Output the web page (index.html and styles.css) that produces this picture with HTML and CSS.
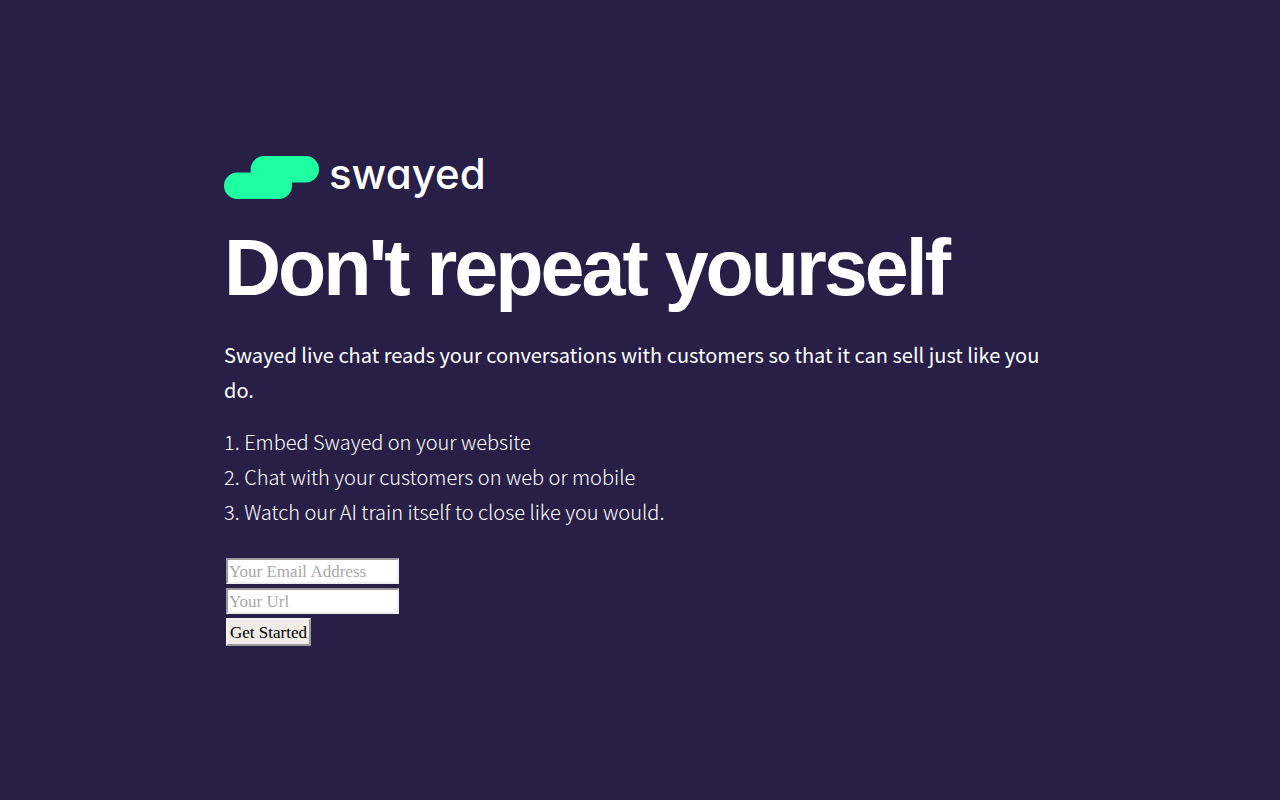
FILE: index.html
```html
<!DOCTYPE html>
<html lang="en">
<head>
<meta charset="utf-8">
<meta name="viewport" content="width=device-width, initial-scale=1">
<title>Swayed</title>
<link rel="stylesheet" href="styles.css">
</head>
<body>
<main class="hero">
  <div class="brand">
    <svg class="brand-mark" viewBox="0 0 95 43" aria-hidden="true">
      <path d="M40 0H81.750A13.250 13.250 0 0 1 81.750 26.500H68V29.700A13.300 13.300 0 0 1 54.700 43H13.250A13.250 13.250 0 0 1 13.250 16.500H26.700V13.300A13.300 13.300 0 0 1 40 0Z"/>
    </svg>
    <span class="brand-name">swayed</span>
  </div>
  <h1 class="headline">Don't repeat yourself</h1>
  <p class="lead">Swayed live chat reads your conversations with customers so that it can sell just like you do.</p>
  <ol class="steps">
    <li>Embed Swayed on your website</li>
    <li>Chat with your customers on web or mobile</li>
    <li>Watch our AI train itself to close like you would.</li>
  </ol>
  <form class="signup">
    <input class="field" type="email" placeholder="Your Email Address" aria-label="Your Email Address">
    <input class="field" type="text" placeholder="Your Url" aria-label="Your Url">
    <button class="submit" type="submit">Get Started</button>
  </form>
</main>
</body>
</html>
```
FILE: styles.css
```css
* {
  box-sizing: border-box;
}

body {
  margin: 0;
  min-height: 100vh;
  display: flex;
  align-items: center;
  justify-content: center;
  background: #281f47;
  color: #fff;
  font-family: "Noto Sans CJK SC", sans-serif;
}

.hero {
  width: 65%;
  padding-top: 2px;
}

.brand {
  display: flex;
  align-items: flex-start;
  gap: 10px;
  height: 43px;
}

.brand-mark {
  width: 95px;
  height: 43px;
  fill: #1dffa0;
}

.brand-name {
  font-family: Inter, sans-serif;
  font-size: 42px;
  font-weight: 500;
  line-height: 35px;
  font-feature-settings: "cv11";
}

.headline {
  margin: 21px 0;
  font-family: "Liberation Sans", Arial, sans-serif;
  font-size: 79px;
  font-weight: 700;
  line-height: 96px;
  letter-spacing: -3px;
}

.lead {
  margin: 0 0 17px;
  font-size: 20px;
  line-height: 35px;
}

.steps {
  margin: 0 0 29px;
  padding: 0;
  list-style-position: inside;
  list-style-type: decimal;
  font-size: 20px;
  font-weight: 300;
  line-height: 35px;
}

.signup {
  display: flex;
  flex-direction: column;
  align-items: flex-start;
  gap: 4px;
  padding: 0 2px;
}

.field,
.submit {
  margin: 0;
  border-radius: 0;
  font-family: "Liberation Serif", serif;
  font-size: 17px;
  line-height: 20px;
}

.field {
  width: 173px;
  height: 26px;
  padding: 2px 1px 0;
  border: 2px solid;
  border-color: #9a9a9a #eee #eee #9a9a9a;
  background: #fff;
  color: #000;
}

.field::placeholder {
  color: #a9a9a9;
  opacity: 1;
}

.submit {
  height: 28px;
  padding: 2px 2px 0;
  border: 2px solid;
  border-color: #f4f2ee #9a9a9a #9a9a9a #f4f2ee;
  background: #efebe7;
  color: #000;
}
```
